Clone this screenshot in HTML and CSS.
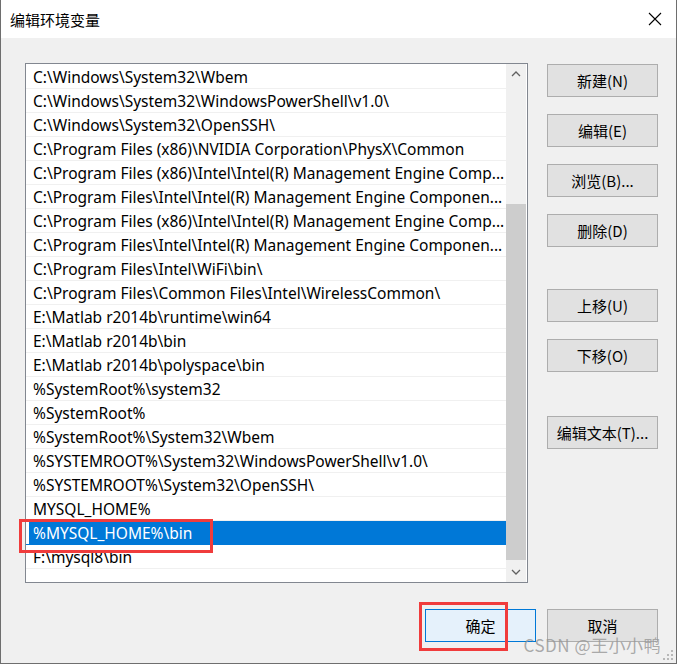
FILE: index.html
```html
<!DOCTYPE html>
<html lang="zh-CN">
<head>
    <meta charset="UTF-8">
    <title>编辑环境变量</title>
    <link rel="stylesheet" href="styles.css">
</head>
<body>
    <div class="window">
        <div class="titlebar">
            <span class="title">编辑环境变量</span>
            <svg class="close" width="14" height="14" viewBox="0 0 14 14"><path d="M1 1L13 13M13 1L1 13" stroke="#000" stroke-width="1.1" fill="none"/></svg>
        </div>

        <div class="content">
            <div class="list">
                <div class="rows">
                    <div class="row">C:\Windows\System32\Wbem</div>
                    <div class="row">C:\Windows\System32\WindowsPowerShell\v1.0\</div>
                    <div class="row">C:\Windows\System32\OpenSSH\</div>
                    <div class="row">C:\Program Files (x86)\NVIDIA Corporation\PhysX\Common</div>
                    <div class="row">C:\Program Files (x86)\Intel\Intel(R) Management Engine Comp...</div>
                    <div class="row">C:\Program Files\Intel\Intel(R) Management Engine Componen...</div>
                    <div class="row">C:\Program Files (x86)\Intel\Intel(R) Management Engine Comp...</div>
                    <div class="row">C:\Program Files\Intel\Intel(R) Management Engine Componen...</div>
                    <div class="row">C:\Program Files\Intel\WiFi\bin\</div>
                    <div class="row">C:\Program Files\Common Files\Intel\WirelessCommon\</div>
                    <div class="row">E:\Matlab r2014b\runtime\win64</div>
                    <div class="row">E:\Matlab r2014b\bin</div>
                    <div class="row">E:\Matlab r2014b\polyspace\bin</div>
                    <div class="row">%SystemRoot%\system32</div>
                    <div class="row">%SystemRoot%</div>
                    <div class="row">%SystemRoot%\System32\Wbem</div>
                    <div class="row">%SYSTEMROOT%\System32\WindowsPowerShell\v1.0\</div>
                    <div class="row">%SYSTEMROOT%\System32\OpenSSH\</div>
                    <div class="row">MYSQL_HOME%</div>
                    <div class="row selected">%MYSQL_HOME%\bin</div>
                    <div class="row">F:\mysql8\bin</div>
                </div>
                <div class="scrollbar">
                    <div class="arrow up"><svg width="10" height="6" viewBox="0 0 10 6"><path d="M1 5L5 1L9 5" stroke="#606060" stroke-width="1.3" fill="none"/></svg></div>
                    <div class="thumb"></div>
                    <div class="arrow down"><svg width="10" height="6" viewBox="0 0 10 6"><path d="M1 1L5 5L9 1" stroke="#606060" stroke-width="1.3" fill="none"/></svg></div>
                </div>
            </div>

            <div class="side-buttons">
                <button class="btn">新建(N)</button>
                <button class="btn">编辑(E)</button>
                <button class="btn">浏览(B)...</button>
                <button class="btn">删除(D)</button>
                <button class="btn group-start">上移(U)</button>
                <button class="btn">下移(O)</button>
                <button class="btn text-edit">编辑文本(T)...</button>
            </div>
        </div>

        <div class="footer">
            <button class="btn primary">确定</button>
            <button class="btn">取消</button>
        </div>

        <div class="mark mark-row"></div>
        <div class="mark mark-ok"></div>
        <div class="watermark">CSDN @王小小鸭</div>
        <svg class="grip" width="12" height="12" viewBox="0 0 12 12" fill="#b8b8b8">
            <rect x="8" y="0" width="2" height="2"/>
            <rect x="4" y="4" width="2" height="2"/><rect x="8" y="4" width="2" height="2"/>
            <rect x="0" y="8" width="2" height="2"/><rect x="4" y="8" width="2" height="2"/><rect x="8" y="8" width="2" height="2"/>
        </svg>
    </div>
</body>
</html>
```

FILE: styles.css
```css
* { box-sizing: border-box; }
body { margin: 0; font-family: "Noto Sans", "Noto Sans CJK SC", sans-serif; color: #000; background: #fff; }

.window {
    position: relative;
    width: 677px;
    height: 664px;
    background: #f0f0f0;
    border: 1px solid #6e6e6e;
    border-top: none;
    overflow: hidden;
}

/* title bar */
.titlebar { height: 38px; background: #fff; display: flex; align-items: center; justify-content: space-between; padding: 0 14px 0 9px; }
.title { font-size: 15px; font-family: "Noto Sans CJK SC", sans-serif; }
.close { display: block; }

/* list + side buttons */
.content { display: flex; gap: 19px; padding: 25px 18px 0 24px; }
.list { width: 503px; height: 520px; background: #fff; border: 1px solid #828790; display: flex; }
.rows { flex: 1; padding-top: 1px; }
.row {
    height: 24px;
    line-height: 24px;
    padding-left: 7px;
    border-bottom: 1px solid #f0f0f0;
    font-size: 15.5px;
    white-space: nowrap;
    overflow: hidden;
}
.row.selected { background: #0078d7; color: #fff; border-bottom-color: #0078d7; box-shadow: inset 3px 0 #fff; }

.scrollbar { width: 20px; margin-right: 1px; background: #f0f0f0; display: flex; flex-direction: column; }
.arrow { height: 20px; display: flex; align-items: center; justify-content: center; }
.arrow svg { display: block; }
.thumb { height: 356px; margin-top: 120px; background: #cdcdcd; }
.arrow.down { margin-top: auto; height: 21px; }

.side-buttons { display: flex; flex-direction: column; gap: 17px; margin-top: 1px; }
.btn {
    width: 111px;
    height: 33px;
    background: #e1e1e1;
    border: 1px solid #adadad;
    font-family: "Noto Sans CJK SC", sans-serif;
    font-size: 15px;
    color: #000;
    padding: 0;
}
.group-start { margin-top: 25px; }
.text-edit { margin-top: 27px; }

/* bottom buttons */
.footer { display: flex; justify-content: flex-end; gap: 11px; padding: 26px 18px 0 0; }
.btn.primary { background: #e5f1fb; border-color: #0078d7; }

/* annotations laid over the dialog */
.mark { position: absolute; border: 3px solid #f03c3c; }
.mark-row { left: 18px; top: 519px; width: 194px; height: 34px; }
.mark-ok { left: 418px; top: 602px; width: 89px; height: 49px; }

.watermark {
    position: absolute;
    right: 15px;
    bottom: 6px;
    font-family: "Noto Sans CJK SC", sans-serif;
    font-size: 17px;
    color: rgba(150, 150, 150, 0.8);
    letter-spacing: 0.5px;
}
.grip { position: absolute; right: 1px; bottom: 1px; }
```
